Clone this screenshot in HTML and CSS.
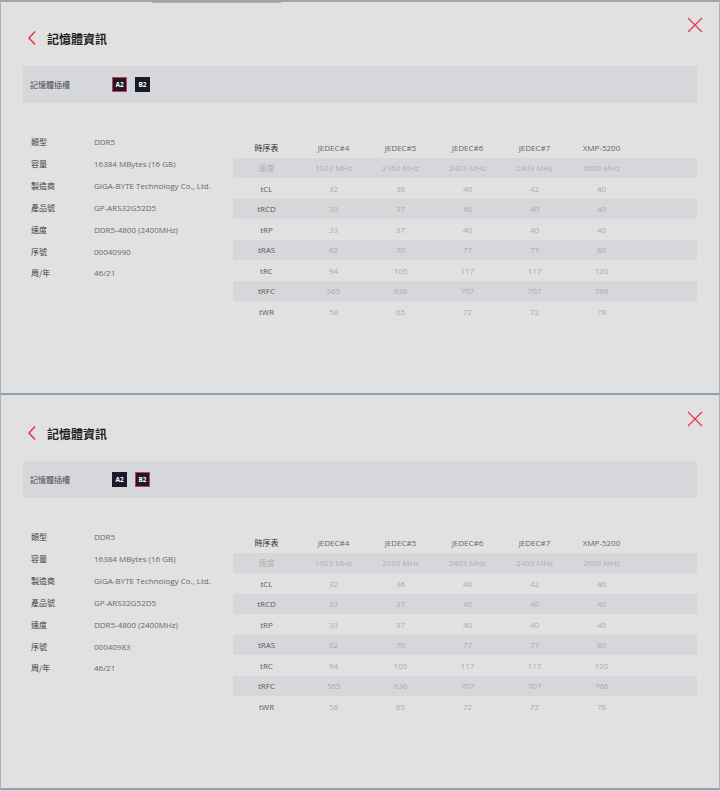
FILE: index.html
```html
<!DOCTYPE html>
<html lang="zh-Hant">
<head>
<meta charset="utf-8">
<link rel="stylesheet" href="styles.css">
</head>
<body>
<div class="window win-top">
  <button class="close" aria-label="close"><svg width="16" height="16" viewBox="0 0 16 16"><path d="M1 1L15 15M15 1L1 15" stroke="#e5344c" stroke-width="1.3" fill="none"/></svg></button>
  <div class="header">
    <svg class="back" width="10" height="16" viewBox="0 0 10 16"><path d="M8 1.5L2 8l6 6.5" stroke="#e5344c" stroke-width="1.5" fill="none"/></svg>
    <h1 class="title">記憶體資訊</h1>
  </div>
  <div class="slotbar">
    <span class="slot-label">記憶體插槽</span>
    <span class="badge selected">A2</span>
    <span class="badge">B2</span>
  </div>
  <div class="main">
    <div class="info">
      <div class="irow"><span class="ik">類型</span><span class="iv">DDR5</span></div>
      <div class="irow"><span class="ik">容量</span><span class="iv">16384 MBytes (16 GB)</span></div>
      <div class="irow"><span class="ik">製造商</span><span class="iv">GIGA-BYTE Technology Co., Ltd.</span></div>
      <div class="irow"><span class="ik">產品號</span><span class="iv">GP-ARS32G52D5</span></div>
      <div class="irow"><span class="ik">速度</span><span class="iv">DDR5-4800 (2400MHz)</span></div>
      <div class="irow"><span class="ik">序號</span><span class="iv">00040990</span></div>
      <div class="irow"><span class="ik">周/年</span><span class="iv">46/21</span></div>
    </div>
    <div class="timing">
      <div class="trow thead"><span class="tk">時序表</span><span>JEDEC#4</span><span>JEDEC#5</span><span>JEDEC#6</span><span>JEDEC#7</span><span>XMP-5200</span></div>
      <div class="trow shade speed"><span class="tk">速度</span><span>1923 MHz</span><span>2163 MHz</span><span>2403 MHz</span><span>2403 MHz</span><span>2600 MHz</span></div>
      <div class="trow"><span class="tk">tCL</span><span>32</span><span>36</span><span>40</span><span>42</span><span>40</span></div>
      <div class="trow shade"><span class="tk">tRCD</span><span>33</span><span>37</span><span>40</span><span>40</span><span>40</span></div>
      <div class="trow"><span class="tk">tRP</span><span>33</span><span>37</span><span>40</span><span>40</span><span>40</span></div>
      <div class="trow shade"><span class="tk">tRAS</span><span>62</span><span>70</span><span>77</span><span>77</span><span>80</span></div>
      <div class="trow"><span class="tk">tRC</span><span>94</span><span>105</span><span>117</span><span>117</span><span>120</span></div>
      <div class="trow shade"><span class="tk">tRFC</span><span>565</span><span>636</span><span>707</span><span>707</span><span>766</span></div>
      <div class="trow"><span class="tk">tWR</span><span>58</span><span>65</span><span>72</span><span>72</span><span>78</span></div>
    </div>
  </div>
</div>
<div class="window win-bottom">
  <button class="close" aria-label="close"><svg width="16" height="16" viewBox="0 0 16 16"><path d="M1 1L15 15M15 1L1 15" stroke="#e5344c" stroke-width="1.3" fill="none"/></svg></button>
  <div class="header">
    <svg class="back" width="10" height="16" viewBox="0 0 10 16"><path d="M8 1.5L2 8l6 6.5" stroke="#e5344c" stroke-width="1.5" fill="none"/></svg>
    <h1 class="title">記憶體資訊</h1>
  </div>
  <div class="slotbar">
    <span class="slot-label">記憶體插槽</span>
    <span class="badge">A2</span>
    <span class="badge selected">B2</span>
  </div>
  <div class="main">
    <div class="info">
      <div class="irow"><span class="ik">類型</span><span class="iv">DDR5</span></div>
      <div class="irow"><span class="ik">容量</span><span class="iv">16384 MBytes (16 GB)</span></div>
      <div class="irow"><span class="ik">製造商</span><span class="iv">GIGA-BYTE Technology Co., Ltd.</span></div>
      <div class="irow"><span class="ik">產品號</span><span class="iv">GP-ARS32G52D5</span></div>
      <div class="irow"><span class="ik">速度</span><span class="iv">DDR5-4800 (2400MHz)</span></div>
      <div class="irow"><span class="ik">序號</span><span class="iv">00040983</span></div>
      <div class="irow"><span class="ik">周/年</span><span class="iv">46/21</span></div>
    </div>
    <div class="timing">
      <div class="trow thead"><span class="tk">時序表</span><span>JEDEC#4</span><span>JEDEC#5</span><span>JEDEC#6</span><span>JEDEC#7</span><span>XMP-5200</span></div>
      <div class="trow shade speed"><span class="tk">速度</span><span>1923 MHz</span><span>2163 MHz</span><span>2403 MHz</span><span>2403 MHz</span><span>2600 MHz</span></div>
      <div class="trow"><span class="tk">tCL</span><span>32</span><span>36</span><span>40</span><span>42</span><span>40</span></div>
      <div class="trow shade"><span class="tk">tRCD</span><span>33</span><span>37</span><span>40</span><span>40</span><span>40</span></div>
      <div class="trow"><span class="tk">tRP</span><span>33</span><span>37</span><span>40</span><span>40</span><span>40</span></div>
      <div class="trow shade"><span class="tk">tRAS</span><span>62</span><span>70</span><span>77</span><span>77</span><span>80</span></div>
      <div class="trow"><span class="tk">tRC</span><span>94</span><span>105</span><span>117</span><span>117</span><span>120</span></div>
      <div class="trow shade"><span class="tk">tRFC</span><span>565</span><span>636</span><span>707</span><span>707</span><span>766</span></div>
      <div class="trow"><span class="tk">tWR</span><span>58</span><span>65</span><span>72</span><span>72</span><span>78</span></div>
    </div>
  </div>
</div>
</body>
</html>
```
FILE: styles.css
```css
* { box-sizing: border-box; }
html, body { margin: 0; padding: 0; }
body {
  width: 720px;
  height: 790px;
  background: #e1e1e1;
  font-family: "Open Sans", "Noto Sans CJK TC", sans-serif;
  font-size: 8px;
  color: #444;
  overflow: hidden;
}
.window {
  position: relative;
  width: 720px;
  height: 395px;
  background: #e1e1e1;
  border-left: 1px solid #9fb3cb;
  border-right: 1px solid #aab2bd;
  padding: 0 22px 0 22px;
}
.win-top {
  border-top: 2px solid #a4a4a4;
  border-bottom: 2px solid #8ea2b7;
  background-image: linear-gradient(90deg, transparent 151px, #c9a3ab 151px, #b9acc8 280px, transparent 280px);
  background-size: 100% 1px;
  background-repeat: no-repeat;
}
.win-bottom {
  border-bottom: 2px solid #8ea2b7;
  border-top: 1px solid #dcdcdc;
}
.close {
  position: absolute;
  top: 15px;
  right: 16px;
  width: 16px;
  height: 16px;
  padding: 0;
  border: 0;
  background: none;
  display: block;
}
.close svg { display: block; }
.header {
  display: flex;
  align-items: center;
  height: 24px;
  margin-top: 24px;
  padding-left: 4px;
}
.win-bottom .header { margin-top: 25px; }
.back { display: block; margin-right: 10px; }
.title {
  margin: 0;
  font-size: 12px;
  font-weight: 700;
  color: #1e1e1e;
  letter-spacing: 0;
  font-family: "Noto Sans CJK TC", sans-serif;
}
.slotbar {
  display: flex;
  align-items: center;
  height: 37px;
  margin-top: 16px;
  background: #d6d7db;
  padding-left: 7px;
}
.slot-label {
  width: 82px;
  color: #4a4a4a;
  font-family: "Noto Sans CJK TC", sans-serif;
}
.badge {
  width: 15px;
  height: 15px;
  margin-right: 8px;
  background: #1b1a28;
  color: #fff;
  font-size: 6.5px;
  font-weight: 700;
  display: flex;
  align-items: center;
  justify-content: center;
  border: 1px solid #1b1a28;
}
.badge.selected { border-color: #d8364f; }
.main {
  display: flex;
  margin-top: 28px;
}
.info {
  width: 210px;
  padding-left: 8px;
}
.irow {
  display: flex;
  align-items: center;
  height: 21.85px;
}
.ik {
  width: 63px;
  color: #3e3e3e;
  font-family: "Noto Sans CJK TC", sans-serif;
}
.iv { color: #686868; }
.timing {
  flex: 1;
  margin-top: 6px;
}
.trow {
  display: grid;
  grid-template-columns: repeat(6, 67px) 1fr;
  align-items: center;
  height: 20.5px;
  color: #ababab;
}
.trow span { text-align: center; }
.trow .tk { color: #5a5a5a; }
.shade { background: #d6d7db; }
.thead span { color: #666; }
.thead .tk { color: #2e2e2e; font-family: "Noto Sans CJK TC", sans-serif; }
.speed span, .speed .tk { color: #b0b0b0; }
```
